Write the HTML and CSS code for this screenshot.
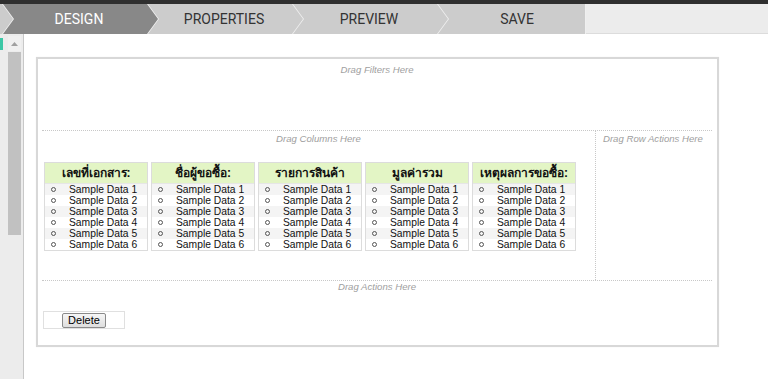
FILE: index.html
```html
<!DOCTYPE html>
<html lang="th">
<head>
    <meta charset="UTF-8">
    <meta name="viewport" content="width=device-width, initial-scale=1.0">
    <title>Report Designer</title>
    <link rel="stylesheet" href="styles.css">
</head>
<body>

<div class="topline"></div>
<nav class="steps">
    <span class="step step-lead"></span>
    <a class="step active">DESIGN</a>
    <a class="step">PROPERTIES</a>
    <a class="step">PREVIEW</a>
    <a class="step step-last">SAVE</a>
    <span class="steps-fill"></span>
</nav>

<div class="workspace">
    <aside class="sidebar">
        <span class="sidebar-mark"></span>
        <div class="scrollbar">
            <span class="scroll-up">
                <svg width="7" height="4" viewBox="0 0 7 4"><polygon points="0,4 3.5,0 7,4" fill="#a0a0a0"/></svg>
            </span>
            <span class="scroll-thumb"></span>
        </div>
    </aside>

    <main class="canvas">
        <section class="designer">
            <div class="zone zone-filters">
                <div class="hint">Drag Filters Here</div>
            </div>

            <div class="zone zone-body">
                <div class="columns-area">
                    <div class="hint">Drag Columns Here</div>
                    <div class="columns">
                        <div class="col">
                            <div class="col-head">เลขที่เอกสาร:</div>
                            <ul class="col-list">
                                <li>Sample Data 1</li>
                                <li>Sample Data 2</li>
                                <li>Sample Data 3</li>
                                <li>Sample Data 4</li>
                                <li>Sample Data 5</li>
                                <li>Sample Data 6</li>
                            </ul>
                        </div>
                        <div class="col">
                            <div class="col-head">ชื่อผู้ขอซื้อ:</div>
                            <ul class="col-list">
                                <li>Sample Data 1</li>
                                <li>Sample Data 2</li>
                                <li>Sample Data 3</li>
                                <li>Sample Data 4</li>
                                <li>Sample Data 5</li>
                                <li>Sample Data 6</li>
                            </ul>
                        </div>
                        <div class="col">
                            <div class="col-head">รายการสินค้า</div>
                            <ul class="col-list">
                                <li>Sample Data 1</li>
                                <li>Sample Data 2</li>
                                <li>Sample Data 3</li>
                                <li>Sample Data 4</li>
                                <li>Sample Data 5</li>
                                <li>Sample Data 6</li>
                            </ul>
                        </div>
                        <div class="col">
                            <div class="col-head">มูลค่ารวม</div>
                            <ul class="col-list">
                                <li>Sample Data 1</li>
                                <li>Sample Data 2</li>
                                <li>Sample Data 3</li>
                                <li>Sample Data 4</li>
                                <li>Sample Data 5</li>
                                <li>Sample Data 6</li>
                            </ul>
                        </div>
                        <div class="col">
                            <div class="col-head">เหตุผลการขอซื้อ:</div>
                            <ul class="col-list">
                                <li>Sample Data 1</li>
                                <li>Sample Data 2</li>
                                <li>Sample Data 3</li>
                                <li>Sample Data 4</li>
                                <li>Sample Data 5</li>
                                <li>Sample Data 6</li>
                            </ul>
                        </div>
                    </div>
                </div>
                <div class="row-actions">
                    <div class="hint">Drag Row Actions Here</div>
                </div>
            </div>

            <div class="zone zone-actions">
                <div class="hint">Drag Actions Here</div>
                <div class="action-bar">
                    <button class="btn-delete">Delete</button>
                </div>
            </div>
        </section>
    </main>
</div>

</body>
</html>
```

FILE: styles.css
```css
body {
    margin: 0;
    font-family: "Liberation Sans", Arial, sans-serif;
    background-color: #fff;
    height: 100vh;
    overflow: hidden;
}
.topline {
    height: 4px;
    background-color: #2f2f2f;
}

/* wizard steps */
.steps {
    display: flex;
    height: 30px;
    background-color: #efefef;
}
.step {
    flex: 0 0 155px;
    margin-right: -10px;
    padding: 0 14px 0 11px;
    box-sizing: border-box;
    display: flex;
    align-items: center;
    justify-content: center;
    background-color: #cccccc;
    color: #333;
    font-family: Roboto, "Liberation Sans", sans-serif;
    font-size: 14px;
    text-decoration: none;
    clip-path: polygon(0 0, 144px 0, 155px 50%, 144px 100%, 0 100%, 11px 50%);
}
.step-lead {
    flex-basis: 13px;
    padding: 0;
    clip-path: polygon(0 0, 2px 0, 13px 50%, 2px 100%, 0 100%);
}
.step.active {
    background-color: #888;
    color: #fff;
}
.step-last {
    flex-basis: 147px;
    margin-right: 1px;
    padding-right: 0;
    clip-path: polygon(0 0, 100% 0, 100% 100%, 0 100%, 11px 50%);
}
.steps-fill {
    flex: 1;
    background-color: #ececec;
    border-bottom: 1px solid #dcdcdc;
}

/* left rail */
.workspace {
    display: flex;
    height: calc(100vh - 34px);
}
.sidebar {
    width: 23px;
    flex-shrink: 0;
    display: flex;
    align-items: flex-start;
    padding-top: 2px;
    box-sizing: content-box;
    background-color: #ececec;
    border-right: 1px solid #c8c8c8;
}
.sidebar-mark {
    width: 3px;
    height: 12px;
    margin-top: 2px;
    background-color: #3cc7a6;
}
.scrollbar {
    width: 13px;
    margin-left: 5px;
    display: flex;
    flex-direction: column;
}
.scroll-up {
    height: 15px;
    display: flex;
    align-items: center;
    justify-content: center;
    background-color: #f0f0f0;
}
.scroll-thumb {
    height: 183px;
    margin-top: 1px;
    background-color: #c1c1c1;
}

/* designer surface */
.canvas {
    flex: 1;
    padding: 23px 0 0 12px;
}
.designer {
    padding: 0 5px 0 4px;
    box-sizing: content-box;
    width: 670px;
    border: 2px solid #d8d8d8;
    box-shadow: 0 0 1px rgba(0, 0, 0, 0.08);
}
.hint {
    font-size: 9.6px;
    font-style: italic;
    line-height: 12px;
    color: #a0a0a0;
    text-align: center;
}
.zone-filters {
    height: 71px;
    padding-top: 5px;
    box-sizing: border-box;
}
.zone-body {
    display: flex;
    height: 151px;
    box-sizing: border-box;
    border-top: 1px dotted #c8c8c8;
    border-bottom: 1px dotted #c8c8c8;
}
.columns-area {
    width: 553px;
    padding-top: 2px;
}
.columns {
    display: flex;
    gap: 3px;
    margin-top: 17px;
    padding-left: 2px;
}
.col {
    width: 104px;
    box-sizing: border-box;
    border: 1px solid #dcdcdc;
}
.col-head {
    height: 20px;
    line-height: 20px;
    background-color: #e3f5c5;
    border-bottom: 1px solid #e6e6e6;
    text-align: center;
    font-family: Tahoma, "Liberation Sans", sans-serif;
    font-size: 12px;
    font-weight: bold;
    color: #111;
}
.col-list {
    list-style: none;
    margin: 0;
    padding: 0;
}
.col-list li {
    height: 11px;
    line-height: 11px;
    font-size: 10.3px;
    color: #111;
    white-space: nowrap;
}
.col-list li:nth-child(odd) {
    background-color: #f4f4f4;
}
.col-list li::before {
    content: "";
    display: inline-block;
    width: 3px;
    height: 3px;
    margin: 0 13px 1px 6px;
    border: 1px solid #555;
    border-radius: 50%;
    vertical-align: middle;
}
.row-actions {
    flex: 1;
    padding: 2px 0 0 7px;
    border-left: 1px dotted #c8c8c8;
}
.row-actions .hint {
    text-align: left;
}
.zone-actions {
    padding-bottom: 16px;
}
.action-bar {
    width: 80px;
    height: 16px;
    margin: 18px 0 0 1px;
    display: flex;
    align-items: center;
    justify-content: center;
    border: 1px solid #e0e0e0;
}
.btn-delete {
    height: 15px;
    padding: 0 5px;
    font-family: "Liberation Sans", Arial, sans-serif;
    font-size: 11px;
    line-height: 13px;
    color: #000;
    background: linear-gradient(#f6f6f6, #dedede);
    border: 1px solid #8a8a8a;
    border-radius: 2px;
}
```
